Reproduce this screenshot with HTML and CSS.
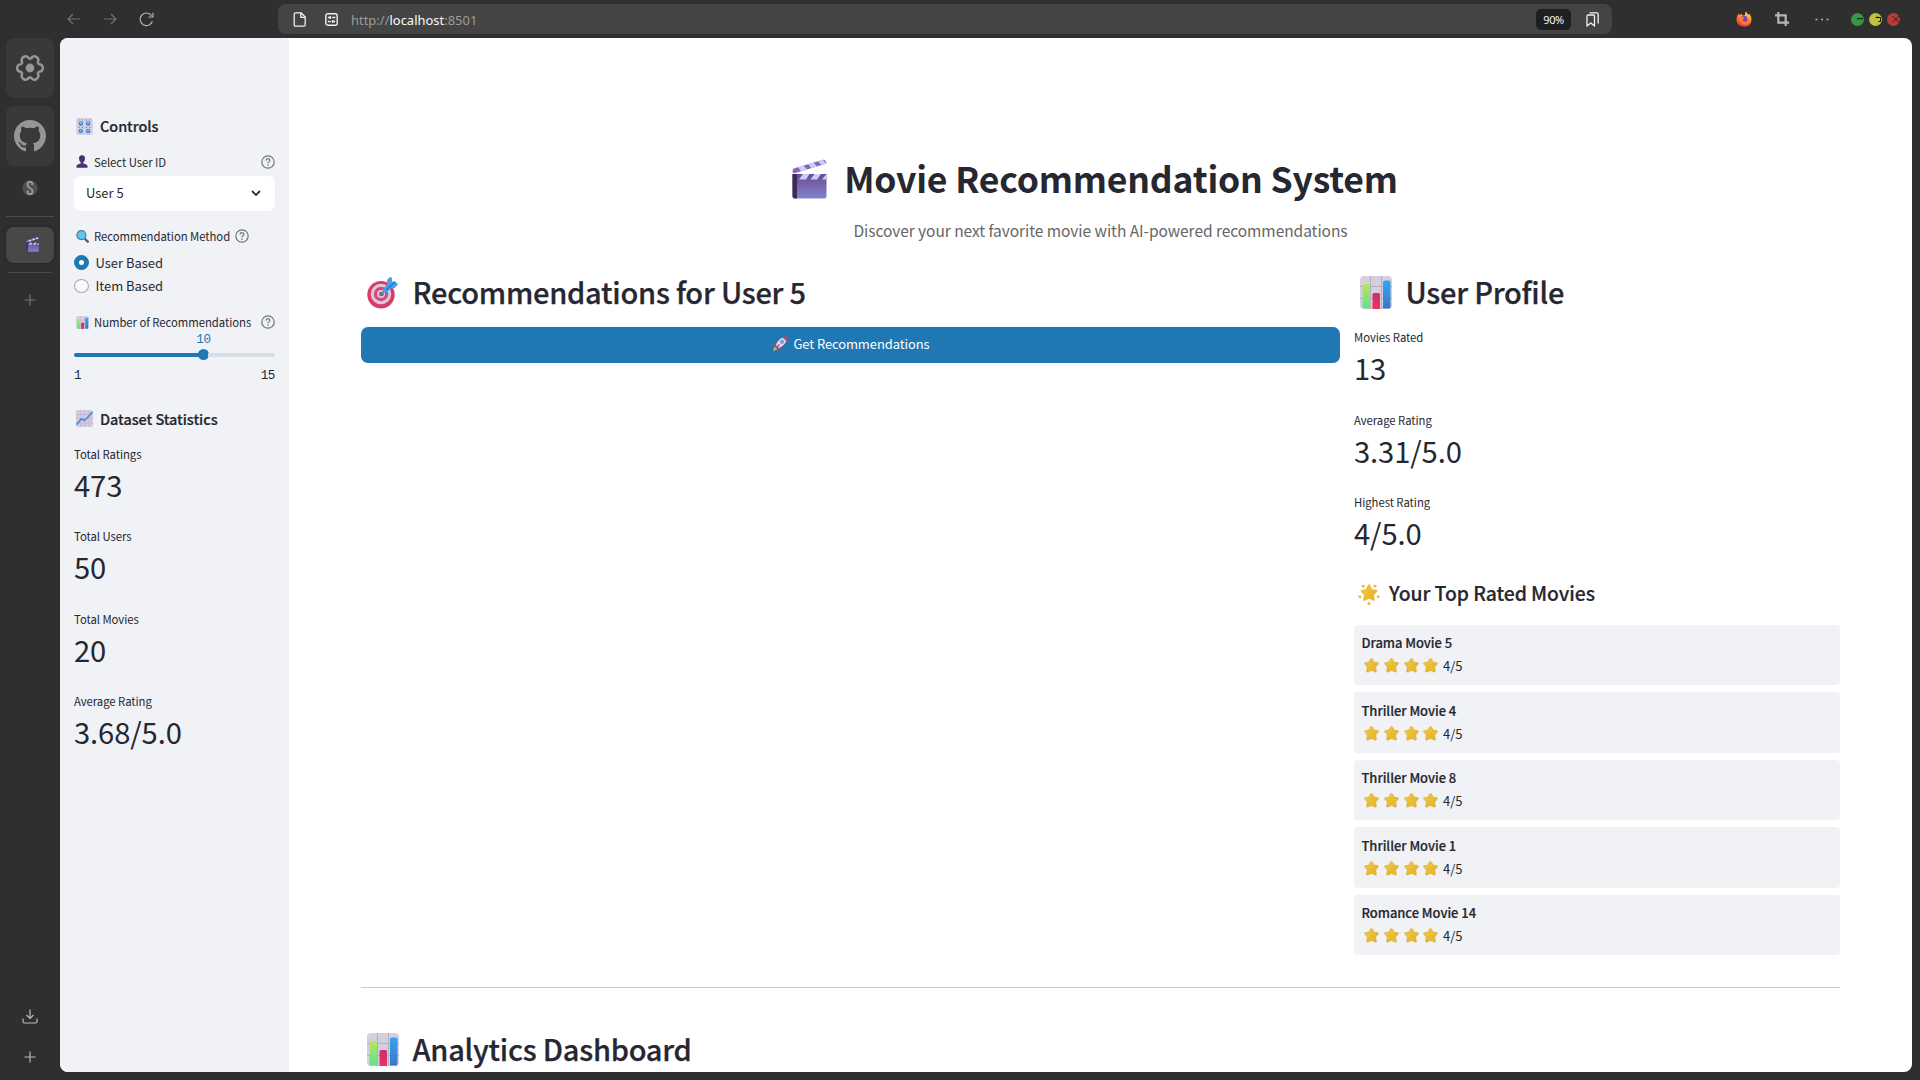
FILE: index.html
```
<!DOCTYPE html>
<html lang="en">
<head>
<meta charset="utf-8">
<title>Movie Recommendation System</title>
<link rel="stylesheet" href="styles.css">
</head>
<body>
<svg class="defs" aria-hidden="true">
  <defs>
    <linearGradient id="g-clap" x1="0" y1="0" x2="0" y2="1"><stop offset="0" stop-color="#6c4a91"/><stop offset="1" stop-color="#7f86cc"/></linearGradient>
    <linearGradient id="g-green" x1="0" y1="0" x2="0" y2="1"><stop offset="0" stop-color="#b4e860"/><stop offset="1" stop-color="#62e08a"/></linearGradient>
    <linearGradient id="g-pink" x1="0" y1="0" x2="0" y2="1"><stop offset="0" stop-color="#c3316f"/><stop offset="1" stop-color="#f0305f"/></linearGradient>
    <linearGradient id="g-blue" x1="0" y1="0" x2="0" y2="1"><stop offset="0" stop-color="#36a4f2"/><stop offset="1" stop-color="#3a76c8"/></linearGradient>
    <linearGradient id="g-star" x1="0" y1="0" x2="1" y2="1"><stop offset="0" stop-color="#f1cd45"/><stop offset=".6" stop-color="#e6bb30"/><stop offset="1" stop-color="#edb63a"/></linearGradient>
    <linearGradient id="g-fox" x1=".7" y1="0" x2=".3" y2="1"><stop offset="0" stop-color="#ffe14a"/><stop offset=".45" stop-color="#ff8a1f"/><stop offset="1" stop-color="#f0264f"/></linearGradient>
    <path id="tooth" d="M9.960-3.650Q12.810-3.190 12.810 0T9.960 3.650Q7.100 4.100 8.140 6.800" fill="none" stroke="#969696" stroke-width="2.400" stroke-linecap="round"/>
    <symbol id="clapper" viewBox="0 0 35 40">
      <path d="M.5 12.500Q.3 9.800 2.500 9.200L31 .8q2.600-.4 3.500 3.800L2.500 14.300Q.6 14.300.5 12.500z" fill="#8468b8"/>
      <path d="M6 8 11.500 6.300 15 10.500 9 12.300zM16 5 21.500 3.500 25 7.500 19.500 9.200zM26 2.200 31 .8 34 4.800 29.500 6.200z" fill="#c9cdfb"/>
      <path d="M.5 15h34V37q0 2.500-2.500 2.500H3Q.5 39.500.5 37z" fill="url(#g-clap)"/>
      <path d="M.5 15H5V39.500H3Q.5 39.500.5 37z" fill="#3d2a55"/>
      <path d="M11 15h6.500L14 20.500H7zM22.500 15H29l-4 5.500h-6.500zM34.500 15v5.500H30z" fill="#c9cdfb"/>
    </symbol>
    <symbol id="chart" viewBox="0 0 32 33">
      <rect width="32" height="33" rx="4" fill="#d6cfdd"/>
      <path d="M10.500 0v33M21.500 0v33M0 10.500h32M0 22.500h32" stroke="#b5adc0" stroke-width="1"/>
      <path d="M2.500 9.500q0-1.500 1.500-1.500h4.500q1.500 0 1.500 1.500V32.500H4Q2.500 32.500 2.500 31z" fill="url(#g-green)"/>
      <path d="M12.500 18.500q0-1.500 1.500-1.500h4.500q1.500 0 1.500 1.500V33h-7.500z" fill="url(#g-pink)"/>
      <path d="M23 6q0-1.500 1.500-1.500H29q1.500 0 1.500 1.500V31q0 1.500-1.500 1.500H23z" fill="url(#g-blue)"/>
    </symbol>
    <symbol id="trend" viewBox="0 0 17 17">
      <rect width="17" height="17" rx="2" fill="#d4cbe0"/>
      <path d="M4.500 0v17M8.700 0v17M13 0v17M0 4.500h17M0 8.700h17M0 13h17" stroke="#bbb1cb" stroke-width=".6"/>
      <path d="M1 14 5.500 8.800 8.500 10.500 11.500 7.500 16 2.500" fill="none" stroke="#3f8fd6" stroke-width="1.700" stroke-linecap="round" stroke-linejoin="round"/>
    </symbol>
    <symbol id="target" viewBox="0 0 32 32">
      <circle cx="14" cy="18.300" r="13.700" fill="#d63c66"/>
      <circle cx="14" cy="17.500" r="10.300" fill="#dcc5dd"/>
      <circle cx="14" cy="17.500" r="7.200" fill="#d84a76"/>
      <circle cx="14" cy="17.500" r="4" fill="#dcc5dd"/>
      <circle cx="14.500" cy="17.500" r="2.300" fill="#6f5f82"/>
      <path d="m14.500 17.500 5-5" stroke="#5a8cc8" stroke-width="2"/>
      <path d="M16 12.500 20.500 7.500 20 3.500 23 .3 25 1.500V5L28.500 5 31 8 27.500 11.500 23.500 12 19.500 16.500 17 15.500z" fill="#44a2ee"/>
      <path d="m19 13.500 9-8" stroke="#2676cb" stroke-width="1.500"/>
    </symbol>
    <symbol id="star" viewBox="0 0 15 15">
      <path d="M7.500.5q.8 0 1.200.8l1.300 2.800 3.500.5q1.600.3.600 1.600L11.700 9l.7 4q.1 1.600-1.400 1L7.500 12.500 4 14q-1.500.6-1.400-1L3.300 9 .9 6.200Q-.1 4.900 1.500 4.600L5 4.100 6.300 1.300q.4-.8 1.200-.8z" fill="url(#g-star)" stroke="#d99f35" stroke-width=".5"/>
    </symbol>
    <symbol id="glow" viewBox="0 0 22 21">
      <path d="M11 .3q.9 0 1.300 1l1.900 3.900 4.300.6q1.700.5.600 1.900l-3.100 3.300.8 4.700q0 1.600-1.400 1.100L11 14.800l-4.400 2q-1.400.5-1.400-1.100L6 11 2.900 7.700q-1.100-1.400.6-1.900l4.300-.6 1.900-3.900q.4-1 1.300-1z" fill="url(#g-star)"/>
      <path d="M3 1.500Q4.500.6 6.800.8L6.200 4Q4 3.500 3 1.500zM15.200.8q2.500-.2 3.800.9-.8 1.900-3 2.300zM0 11.500l3.800.3-1.500 3Q.3 13.800 0 11.500zM18.200 11.800l3.800-.3q-.3 2.300-2.300 3.300zM9.200 20.300 11 17.300l1.800 3q-1.800 1.200-3.600 0z" fill="#edb747"/>
    </symbol>
    <symbol id="rocket" viewBox="0 0 16 16">
      <path d="M3 7.500 6 5.500l4.500 4.500-1.500 3-2 1.500-1-3-1.500-1.500-3-.5z" fill="#d43c61"/>
      <path d="M2.500 10.500 1 15l4.500-1.500z" fill="#f3a53a"/>
      <path d="M4 9.500Q5.500 3.500 11 1.500l3.500 3Q12.500 10 6.500 12z" fill="#dfd9ee"/>
      <path d="M10.500 1.700Q13 .4 15.500.5q0 2.500-1.300 4.500z" fill="#d43c61"/>
      <circle cx="10" cy="5.800" r="1.900" fill="#5b7fc4"/>
      <circle cx="10" cy="5.800" r=".9" fill="#8fc0ee"/>
      <path d="m5 11 2.500-2.500" stroke="#c83861" stroke-width="1.200"/>
    </symbol>
    <symbol id="knobs" viewBox="0 0 17 17">
      <rect x=".3" width="16.400" height="17" rx="2" fill="#d5cce5"/>
      <g fill="#4b8ecb"><circle cx="4.800" cy="5.600" r="2.300"/><circle cx="12.200" cy="5.600" r="2.300"/><circle cx="4.800" cy="13" r="2.300"/><circle cx="12.200" cy="13" r="2.300"/></g>
      <g fill="#8bc2ee"><circle cx="4.800" cy="5" r="1"/><circle cx="12.200" cy="5" r="1"/><circle cx="4.800" cy="12.400" r="1"/><circle cx="12.200" cy="12.400" r="1"/></g>
      <path d="M2.500 2h1M6 2h1M10 2h1M13.500 2h1M2.500 9.500h1M6 9.500h1M10 9.500h1M13.500 9.500h1" stroke="#7b6d99" stroke-width="1"/>
    </symbol>
    <symbol id="person" viewBox="0 0 12 13">
      <path d="M6 .2q3 0 3 3.100 0 2.800-1.700 4V8.500q4.400.7 4.400 3.500 0 .8-.8.800H1.100q-.8 0-.8-.8 0-2.800 4.400-3.500V7.300Q3 6.100 3 3.300 3 .2 6 .2z" fill="#4a2f77"/>
    </symbol>
    <symbol id="lens" viewBox="0 0 13 13">
      <path d="m8.500 8.500 3.300 3.200" stroke="#7a4a86" stroke-width="2.400" stroke-linecap="round"/>
      <circle cx="5.400" cy="5.200" r="4.500" fill="#5fc6ee" stroke="#4a7d9d" stroke-width="1.200"/>
    </symbol>
    <symbol id="help" viewBox="0 0 14 14">
      <circle cx="7" cy="7" r="6.200" fill="none" stroke="#73757e" stroke-width="1.200"/>
      <path d="M5 5.600q.1-1.900 2-1.900 1.900.1 1.900 1.700 0 .8-1 1.400-.9.500-.9 1.500" fill="none" stroke="#73757e" stroke-width="1.200"/>
      <circle cx="7" cy="10.100" r=".8" fill="#73757e"/>
    </symbol>
    <symbol id="plus" viewBox="0 0 12 12"><path d="M6 .5v11M.5 6h11" stroke="currentColor" stroke-width="1.100"/></symbol>
  </defs>
</svg>

<div class="browser">
  <header class="toolbar">
    <div class="nav">
      <svg class="arrow" viewBox="0 0 14 12"><path d="M13 6H1M6 1 1 6l5 5" fill="none" stroke="#707070" stroke-width="1.200"/></svg>
      <svg class="arrow" viewBox="0 0 14 12"><path d="M1 6h12M8 1l5 5-5 5" fill="none" stroke="#707070" stroke-width="1.200"/></svg>
      <svg class="reload" viewBox="0 0 15 15"><path d="M13.400 9.300A6.300 6.300 0 1 1 12.600 3.700" fill="none" stroke="#b4b4b4" stroke-width="1.200"/><path d="M14 .8V5H9.500" fill="none" stroke="#b4b4b4" stroke-width="1.200"/></svg>
    </div>
    <div class="urlbar">
      <svg class="doc" viewBox="0 0 13 15"><path d="M2.500.8H8L12.200 5v7.700q0 1.500-1.500 1.500h-8q-1.500 0-1.500-1.500V2.300Q1.200.8 2.500.8zM7.800 1v4.300h4.300" fill="none" stroke="#f0f0f0" stroke-width="1.300" stroke-linejoin="round"/></svg>
      <svg class="perm" viewBox="0 0 13 13"><rect x=".8" y=".8" width="11.400" height="11.400" rx="2" fill="none" stroke="#f0f0f0" stroke-width="1.400"/><path d="M2.800 4.500h3.400M7.300 4.500h3M2.800 8.500h3M6.800 8.500h3.400M5.300 3v3M7.700 7v3" stroke="#f0f0f0" stroke-width="1.300"/></svg>
      <div class="url">http://<b>localhost</b>:8501</div>
      <div class="zoom">90%</div>
      <svg class="marks" viewBox="0 0 13 15"><path d="M1 4q0-1 1-1h5.500q1 0 1 1v10L4.800 11 1 14zM3.500.8H11q1.200 0 1.200 1.200v9.500" fill="none" stroke="#f0f0f0" stroke-width="1.300" stroke-linejoin="round"/></svg>
    </div>
    <div class="tools">
      <svg class="fox" viewBox="0 0 16 16"><path d="M2.800 2.500 3.300 4 5.500 2.800 6.200 4.500Q8 4 9 4.200 8.500 2 10 .4q.8 2 2.300 3L13.500 3q2.300 3 2 6-.8 6.500-7.500 6.700Q1 15.300.4 8.800.400 5 2.800 2.500z" fill="url(#g-fox)"/><circle cx="8.200" cy="8.300" r="3.300" fill="#7a3ccc"/><path d="M3.500 6.500 8 6.200 8.500 7.500 6.500 8.600Q7 11 10 10.800 12 10 12 8q1.500 3-1 5-4 1.500-6.500-1.500z" fill="#ff7a2a"/></svg>
      <svg class="crop" viewBox="0 0 14 14"><path d="M3.300 0v10.700H14M0 3.300h10.700V14" fill="none" stroke="#b6b6b6" stroke-width="2.200"/></svg>
      <svg class="dots" viewBox="0 0 14 3"><path d="M.5 1.500h2M6 1.500h2M11.500 1.500h2" stroke="#b6b6b6" stroke-width="1.600"/></svg>
    </div>
    <div class="window-buttons">
      <svg viewBox="0 0 13 13"><circle cx="6.500" cy="6.500" r="6.500" fill="#359748"/><path d="M6 5.700h6" stroke="#111" stroke-width="1"/></svg>
      <svg viewBox="0 0 13 13"><circle cx="6.500" cy="6.500" r="6.500" fill="#c0c043"/><path d="M6.500 4.500H11.500V8.500M8.500 3.500v1M9.500 8.500h2" fill="none" stroke="#111" stroke-width="1"/></svg>
      <svg viewBox="0 0 13 13"><circle cx="6.500" cy="6.500" r="6.500" fill="#b83b3b"/><path d="m5.500 3 6.500 6.500M12 3 5.500 9.500" stroke="#3a1010" stroke-width=".9"/></svg>
    </div>
  </header>

  <nav class="rail">
    <div class="pin"><svg class="gear" viewBox="-14 -14 28 28"><use href="#tooth"/><use href="#tooth" transform="rotate(60)"/><use href="#tooth" transform="rotate(120)"/><use href="#tooth" transform="rotate(180)"/><use href="#tooth" transform="rotate(240)"/><use href="#tooth" transform="rotate(300)"/><circle r="4.400" fill="#969696"/></svg></div>
    <div class="pin"><svg class="octo" viewBox="0 0 16 16"><path fill="#969696" d="M8 0C3.580 0 0 3.580 0 8c0 3.540 2.290 6.530 5.470 7.590.4.070.55-.17.55-.38 0-.19-.01-.82-.01-1.490-2.010.37-2.530-.49-2.690-.94-.09-.23-.48-.94-.82-1.130-.28-.15-.68-.52-.01-.53.63-.01 1.080.58 1.230.82.72 1.210 1.870.87 2.330.66.070-.52.28-.87.51-1.070-1.780-.2-3.640-.89-3.640-3.950 0-.87.31-1.590.82-2.150-.08-.2-.36-1.020.08-2.120 0 0 .67-.21 2.200.82.64-.18 1.320-.27 2-.27s1.360.09 2 .27c1.530-1.040 2.200-.82 2.200-.82.44 1.100.16 1.920.08 2.120.51.56.82 1.270.82 2.150 0 3.070-1.870 3.750-3.650 3.950.29.25.54.73.54 1.480 0 1.070-.01 1.930-.01 2.200 0 .21.15.46.55.38A8.010 8.010 0 0 0 16 8c0-4.420-3.580-8-8-8z"/></svg></div>
    <div class="tab"><svg class="badge" viewBox="0 0 16 16"><circle cx="8" cy="8" r="7.600" fill="#505050"/><path d="M10.300 5V3.500q0-1.500-1.500-1.500H7.200Q5.700 2 5.700 3.500v2q0 1.200 2.300 2.500t2.300 2.500v2q0 1.500-1.500 1.500H7.200q-1.500 0-1.500-1.500V10.500" fill="none" stroke="#979797" stroke-width="2"/></svg></div>
    <hr>
    <div class="tab active"><svg class="mini"><use href="#clapper"/></svg></div>
    <hr class="short">
    <svg class="add"><use href="#plus"/></svg>
    <div class="rail-foot">
      <svg class="down" viewBox="0 0 16 15"><path d="M8 .5v9M4.500 6 8 9.500 11.500 6M1 9.500v3Q1 14 2.500 14h11q1.500 0 1.500-1.500v-3" fill="none" stroke="#bcbcbc" stroke-width="1.200"/></svg>
      <svg class="add light"><use href="#plus"/></svg>
    </div>
  </nav>

  <div class="page">
    <aside class="sidebar">
      <h3><svg class="ico17"><use href="#knobs"/></svg><span>Controls</span></h3>
      <div class="label first"><svg class="ico12"><use href="#person"/></svg><span>Select User ID</span><svg class="help end"><use href="#help"/></svg></div>
      <div class="select"><span>User 5</span><svg viewBox="0 0 10 7"><path d="m1 1 4 4 4-4" fill="none" stroke="#31333f" stroke-width="1.900"/></svg></div>
      <div class="label method"><svg class="ico13"><use href="#lens"/></svg><span>Recommendation Method</span><svg class="help"><use href="#help"/></svg></div>
      <div class="radios">
        <div class="radio"><i class="on"></i><span>User Based</span></div>
        <div class="radio"><i></i><span>Item Based</span></div>
      </div>
      <div class="label count"><svg class="ico13"><use href="#chart"/></svg><span>Number of Recommendations</span><svg class="help end"><use href="#help"/></svg></div>
      <div class="slider">
        <div class="value">10</div>
        <div class="track"><div class="fill"></div><div class="thumb"></div><div class="rest"></div></div>
        <div class="ticks"><span>1</span><span>15</span></div>
      </div>
      <h3 class="stats-title"><svg class="ico17"><use href="#trend"/></svg><span>Dataset Statistics</span></h3>
      <div class="metrics">
        <div class="metric"><p>Total Ratings</p><strong>473</strong></div>
        <div class="metric"><p>Total Users</p><strong>50</strong></div>
        <div class="metric"><p>Total Movies</p><strong>20</strong></div>
        <div class="metric"><p>Average Rating</p><strong>3.68/5.0</strong></div>
      </div>
    </aside>

    <main class="main">
      <h1><svg class="clap"><use href="#clapper"/></svg><span>Movie Recommendation System</span></h1>
      <p class="subtitle">Discover your next favorite movie with AI-powered recommendations</p>
      <div class="columns">
        <section>
          <h2><svg class="ico32"><use href="#target"/></svg><span>Recommendations for User 5</span></h2>
          <div class="button"><svg class="rocket"><use href="#rocket"/></svg><span>Get Recommendations</span></div>
        </section>
        <section>
          <h2><svg class="ico32"><use href="#chart"/></svg><span>User Profile</span></h2>
          <div class="metrics">
            <div class="metric"><p>Movies Rated</p><strong>13</strong></div>
            <div class="metric"><p>Average Rating</p><strong>3.31/5.0</strong></div>
            <div class="metric"><p>Highest Rating</p><strong>4/5.0</strong></div>
          </div>
          <h4><svg class="glow"><use href="#glow"/></svg><span>Your Top Rated Movies</span></h4>
          <div class="cards">
            <div class="card"><b>Drama Movie 5</b><div class="stars"><svg><use href="#star"/></svg><svg><use href="#star"/></svg><svg><use href="#star"/></svg><svg><use href="#star"/></svg><span>4/5</span></div></div>
            <div class="card"><b>Thriller Movie 4</b><div class="stars"><svg><use href="#star"/></svg><svg><use href="#star"/></svg><svg><use href="#star"/></svg><svg><use href="#star"/></svg><span>4/5</span></div></div>
            <div class="card"><b>Thriller Movie 8</b><div class="stars"><svg><use href="#star"/></svg><svg><use href="#star"/></svg><svg><use href="#star"/></svg><svg><use href="#star"/></svg><span>4/5</span></div></div>
            <div class="card"><b>Thriller Movie 1</b><div class="stars"><svg><use href="#star"/></svg><svg><use href="#star"/></svg><svg><use href="#star"/></svg><svg><use href="#star"/></svg><span>4/5</span></div></div>
            <div class="card"><b>Romance Movie 14</b><div class="stars"><svg><use href="#star"/></svg><svg><use href="#star"/></svg><svg><use href="#star"/></svg><svg><use href="#star"/></svg><span>4/5</span></div></div>
          </div>
        </section>
      </div>
      <hr>
      <h2 class="analytics"><svg class="ico32"><use href="#chart"/></svg><span>Analytics Dashboard</span></h2>
    </main>
  </div>
</div>
</body>
</html>
```
FILE: styles.css
```
* { box-sizing: border-box; margin: 0; padding: 0; }
body {
  width: 1920px; height: 1080px; overflow: hidden;
  font-family: "Noto Sans CJK SC", "Open Sans", sans-serif;
  font-size: 12.96px; color: #262730; background: #2f2f2f;
}
svg { display: block; flex: none; }
.defs { width: 0; height: 0; position: absolute; }

/* Browser frame */
.browser {
  display: grid; width: 1920px; height: 1080px;
  grid-template: 38px 1034px / 60px 1852px;
}
.toolbar { grid-column: 1 / -1; width: 1920px; display: flex; align-items: center; }
.nav { display: flex; align-items: center; width: 278px; padding-left: 67px; }
.arrow { width: 14px; height: 12px; margin-right: 22px; }
.reload { width: 15px; height: 15px; }
.urlbar {
  display: flex; align-items: center; width: 1334px; height: 30px;
  padding: 0 13px 0 14.5px; border-radius: 8px; background: #444;
}
.doc { width: 13px; height: 15px; margin-right: 19px; }
.perm { width: 13px; height: 13px; margin-right: 13.5px; }
.url { flex: 1; font: 12.9px/20px "Noto Sans", sans-serif; color: #9c9c9c; padding-top: 1px; letter-spacing: .03px; }
.url b { font-weight: 400; color: #fbfbfb; }
.zoom {
  width: 35px; height: 21px; margin-right: 15px; border-radius: 5px; background: #1e1f1f;
  color: #f5f5f5; font: 11px/21px "Noto Sans", sans-serif; text-align: center; letter-spacing: -.4px;
}
.marks { width: 13px; height: 15px; }
.tools { display: flex; align-items: center; width: 239px; padding-left: 124px; }
.fox { width: 16px; height: 16px; margin-right: 23px; }
.crop { width: 14px; height: 14px; margin-right: 26px; }
.dots { width: 14px; height: 3px; }
.window-buttons { display: flex; gap: 5px; padding-top: 1px; }
.window-buttons svg { width: 13px; height: 13px; }

/* Left tab rail */
.rail { display: flex; flex-direction: column; align-items: center; }
.pin { width: 48px; height: 60px; margin-bottom: 8px; border-radius: 8px; background: #393939; display: grid; place-items: center; }
.gear { width: 28px; height: 28px; }
.octo { width: 32px; height: 32px; }
.tab { width: 48px; height: 36px; margin-bottom: 10px; margin-top: -4px; display: grid; place-items: center; }
.badge { width: 16px; height: 16px; }
.rail hr { width: 48px; border: 0; height: 1px; background: #4a4a4a; }
.rail .active { margin: 10px 0 9px; border-radius: 8px; background: #484848; box-shadow: 0 0 3px #222; padding: 0 0 1px 4px; }
.mini { width: 13px; height: 15px; }
.rail .short { width: 44px; }
.add { width: 12px; height: 12px; margin-top: 21px; color: #777; }
.rail-foot { margin-top: auto; padding-bottom: 9px; display: flex; flex-direction: column; align-items: center; }
.down { width: 16px; height: 15px; }
.add.light { margin-top: 27px; color: #bcbcbc; }

/* Page */
.page { display: flex; height: 1034px; border-radius: 8px; overflow: hidden; background: #fff; }
.sidebar { width: 229px; padding: 76px 14px 0; background: #f0f2f6; }
h3 { display: flex; align-items: center; height: 24px; font-size: 14.5px; line-height: 24px; font-weight: 500; -webkit-text-stroke: .2px; padding-left: 2px; letter-spacing: -.07px; }
h3 svg { margin-right: 7px; }
.ico17 { width: 17px; height: 17px; }
.label { display: flex; align-items: center; height: 20px; font-size: 11.34px; line-height: 20px; padding-left: 2px; }
.label span { margin-left: 5px; letter-spacing: -.05px; white-space: nowrap; }
.first { margin-top: 13.8px; }
.ico12 { width: 12px; height: 13px; margin: 0 1px 0 0; }
.ico13 { width: 13px; height: 13px; }
.help { width: 14px; height: 14px; margin-left: 5px; }
.help.end { margin-left: auto; }
.select {
  display: flex; align-items: center; justify-content: space-between; height: 35px; margin-top: 4.2px;
  padding: 0 14px 2px 12px; border-radius: 7px; background: #fff;
}
.select svg { width: 10px; height: 7px; margin-top: 2px; }
.method { margin-top: 15.4px; }
.radios { margin-top: 5.1px; }
.radio { display: flex; align-items: center; gap: 6.5px; height: 23px; line-height: 23px; }
.radio i { width: 15px; height: 14px; border: 1px solid #a4a6ab; border-radius: 50%; background: #fafafb; }
.radio .on { border: 5px solid #1f77b4; background: #fff; height: 15px; }
.count { margin-top: 14.8px; }
.slider { margin-top: 1.2px; font: 12.6px/14px "Liberation Mono", monospace; }
.value { width: 22px; margin-left: 118.5px; text-align: center; color: #1f77b4; letter-spacing: -.4px; }
.track { display: flex; align-items: center; height: 16px; margin-top: -.5px; }
.fill { width: 124.5px; height: 4px; border-radius: 2px 0 0 2px; background: #1f77b4; }
.thumb { width: 11px; height: 11px; margin: 0 -1px; border-radius: 50%; background: #1f77b4; }
.rest { flex: 1; height: 4px; border-radius: 0 2px 2px 0; background: #d5dde7; }
.ticks { display: flex; justify-content: space-between; margin-top: 6px; letter-spacing: -.4px; }
.stats-title { margin-top: 24px; }

.metrics { display: grid; row-gap: 22.5px; }
.sidebar .metrics { margin-top: 13px; }
.metric p { font-size: 11.34px; line-height: 20px; letter-spacing: -.05px; }
.metric strong { display: block; font-size: 29.16px; line-height: 40px; font-weight: 400; letter-spacing: -.1px; }

.main { flex: 1; padding: 115px 72px 0; }
h1 { display: flex; align-items: center; justify-content: center; height: 49px; font-size: 35.5px; line-height: 49px; font-weight: 700; letter-spacing: -.18px; padding-right: 11px; }
.clap { width: 35px; height: 40px; margin: 2px 17px 0 0; }
.subtitle { margin-top: 15px; height: 26px; line-height: 26px; font-size: 15.5px; letter-spacing: -.05px; text-align: center; color: #666; }
.columns { display: grid; grid-template-columns: 979px 486px; column-gap: 14px; margin-top: 28px; }
h2 { display: flex; align-items: center; height: 40px; padding-left: 6px; font-size: 29px; line-height: 40px; font-weight: 500; -webkit-text-stroke: .25px; letter-spacing: -.23px; }
.ico32 { width: 32px; height: 33px; margin: 3px 13.5px 0 0; }
.button {
  display: flex; align-items: center; justify-content: center; gap: 5px; height: 36px; margin-top: 16px;
  padding: 0 0 3px 1px; border-radius: 7px; background: #1f77b4; color: #fff; letter-spacing: -.08px;
}
.rocket { width: 16px; height: 16px; }
.columns .metrics { margin-top: 16px; }
h4 { display: flex; align-items: center; height: 30px; margin-top: 26px; padding-left: 4px; font-size: 19.4px; line-height: 30px; font-weight: 500; -webkit-text-stroke: .2px; letter-spacing: -.07px; }
.glow { width: 22px; height: 21px; margin: 2px 9px 0 0; }
.cards { display: grid; row-gap: 7px; margin-top: 17px; }
.card { height: 60.4px; padding: 6.4px 7.5px; border-radius: 4px; background: #f0f2f6; line-height: 23px; }
.card b { display: block; font-weight: 500; -webkit-text-stroke: .2px; letter-spacing: -.04px; }
.stars { display: flex; align-items: center; gap: 4.7px; padding-left: 2.8px; }
.stars svg { width: 15px; height: 15px; }
.main hr { height: 1px; margin-top: 31.6px; border: 0; background: #cbcbce; }
.analytics { margin-top: 40px; }
```
